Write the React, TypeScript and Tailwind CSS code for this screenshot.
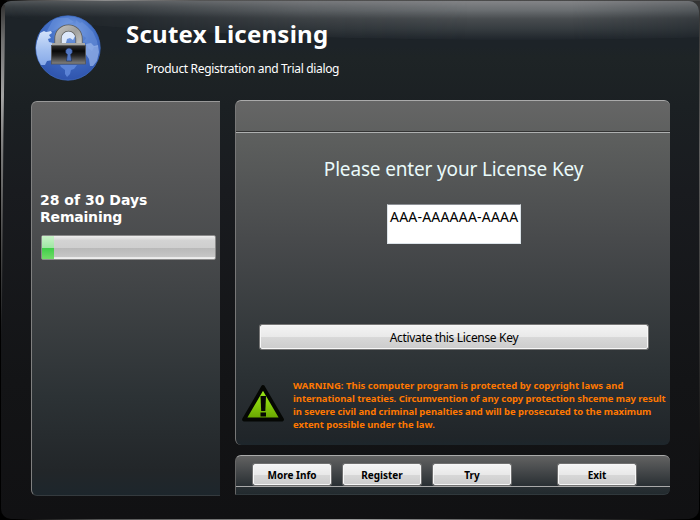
import React from "react";

function Globe() {
  return (
    <svg className="block h-[66px] w-[66px]" viewBox="0 0 66 66">
      <defs>
        <radialGradient id="sea" cx="0.55" cy="0.25" r="0.75">
          <stop offset="0" stopColor="#7fa5e6" />
          <stop offset="0.4" stopColor="#4673c9" />
          <stop offset="1" stopColor="#2f54ad" />
        </radialGradient>
        <linearGradient id="land" x1="0" y1="0" x2="0" y2="1">
          <stop offset="0" stopColor="#d3e2fa" />
          <stop offset="0.55" stopColor="#a3c0f0" />
          <stop offset="1" stopColor="#86a9e8" />
        </linearGradient>
        <linearGradient id="steel" x1="0" y1="0" x2="1" y2="1">
          <stop offset="0" stopColor="#bdbdbb" />
          <stop offset="0.5" stopColor="#a0a09d" />
          <stop offset="1" stopColor="#c4c4c0" />
        </linearGradient>
        <linearGradient id="body" x1="0" y1="0" x2="0" y2="1">
          <stop offset="0" stopColor="#303030" />
          <stop offset="0.3" stopColor="#080808" />
          <stop offset="0.55" stopColor="#252525" />
          <stop offset="1" stopColor="#858585" />
        </linearGradient>
        <clipPath id="disc"><circle cx="33" cy="33" r="32" /></clipPath>
      </defs>
      <circle cx="33" cy="33" r="32.2" fill="url(#sea)" stroke="#3f6cc4" strokeWidth="0.8" />
      <g clipPath="url(#disc)">
        <path d="M5 18l4-2 2 1 5-1 1 2-3 2 2 3-3 1 1 3 4 1v17l-6 1-2 4-5 0-4-7-1-9 2-8z" fill="url(#land)" />
        <path d="M26 20l4-5 6-1 4 3 0 4-2 4-3-2-3 1-1 4-6 0z" fill="#dce8fb" />
        <path d="M41 5l4 3 2-1 5 4 6 6 4 9 1 6-4 0-2 4-4-3-2-5-3-1 3-4-4-3-3-6-4-2z" fill="#7198de" opacity="0.5" />
        <path d="M51 29l5-1 3 3 4-1 1 7-2 9-4 5-3 0-1-7-4-6z" fill="#9bb8ec" opacity="0.7" />
        <path d="M25 50l17 0-3 4-3 1-1 4-3 3-2-3 0-4-4-3z" fill="#6189da" opacity="0.85" />
        <path d="M19 3h14l6 4-11 3-9 6-7 0z" fill="#7ca2e7" opacity="0.4" />
      </g>
      <path d="M23 31V23.500a10.500 10.500 0 0 1 21 0V31" fill="none" stroke="#5e5e5b" strokeWidth="7.200" />
      <path d="M23 31V23.500a10.500 10.500 0 0 1 21 0V31" fill="none" stroke="url(#steel)" strokeWidth="5.600" />
      <rect x="17" y="28" width="33" height="3" fill="#a7a7a4" />
      <rect x="16.500" y="30.500" width="34" height="18.500" fill="url(#body)" stroke="#555" strokeWidth="0.8" />
      <path d="M34 33a3.400 3.400 0 0 1 1.600 6.400l1 6.600h-5.200l1-6.600A3.400 3.400 0 0 1 34 33z" fill="#5278c4" stroke="#1c2d58" strokeWidth="0.6" />
    </svg>
  );
}

function Warning() {
  return (
    <svg className="block h-[40px] w-[44px] shrink-0" viewBox="0 0 44 40">
      <defs>
        <linearGradient id="lime" x1="0" y1="0" x2="0" y2="1">
          <stop offset="0" stopColor="#9bea1c" />
          <stop offset="0.5" stopColor="#88d00c" />
          <stop offset="1" stopColor="#66a200" />
        </linearGradient>
      </defs>
      <path d="M22 3L41 35.500H3z" fill="url(#lime)" stroke="#050704" strokeWidth="3.800" strokeLinejoin="round" />
      <path d="M19.500 12h5.500l-0.700 15h-4.100z" fill="#050704" />
      <rect x="19.500" y="28.500" width="5.500" height="4" fill="#050704" />
    </svg>
  );
}

const face =
  "flex items-center justify-center border border-[#f7f7f7] bg-[linear-gradient(#f3f3f3_0%,#e9e9e9_50%,#d8d8d8_51%,#cdcdcd_100%)] text-black";

function SmallButton({ label, gap }: { label: string; gap: string }) {
  return (
    <button className={`${gap} ${face} h-[21px] w-[78px] rounded-[2px] pt-px text-[10px] font-bold leading-none shadow-[0_0_0_1px_#707070]`}>
      {label}
    </button>
  );
}

export default function App() {
  return (
    <div className="flex h-[520px] w-[700px] flex-col overflow-hidden bg-black font-['Noto_Sans','Open_Sans',sans-serif]">
      <div className="h-px shrink-0 bg-[linear-gradient(90deg,#000_4px,#444_30px,#8c8c8c_105px,#555_200px,#444_690px)]" />
      <div className="flex h-[518px] shrink-0 bg-[linear-gradient(90deg,#000_50%,transparent_50%),linear-gradient(#333,#606060_150px,#333_330px,#000_500px)] pl-px pr-px">
        <div className="relative h-[518px] w-[698px] overflow-hidden rounded-[10px] bg-[linear-gradient(#1d2328_0px,#1d2328_45px,#1e2426_56px,#1b2023_105px,#191b1f_190px,#131416_380px,#111113_517px)]">
          <div className="absolute left-0 top-0 h-[16px] w-full bg-[linear-gradient(#505457,#363c40_6px,#262c31_13px,transparent)]" />
          <div className="absolute -left-[130px] -top-[80px] h-[119px] w-[1290px] rounded-[50%] bg-[linear-gradient(#838487_80px,#6b6f72_89px,#484c4f_98px,#363c40_108px,#1f252b_119px)] [mask-image:linear-gradient(90deg,transparent_130px,#0003_260px,#000b_430px,#000_600px,#000_700px,#0009_828px)]" />
          <div className="absolute left-0 top-[4px] h-[340px] w-[4px] bg-[linear-gradient(#333,#707070_35px,#a4a4a4_92px,#777_150px,#444_250px,transparent)] [clip-path:polygon(0_0,100%_0,100%_20px,60%_130px,25%_300px,0_340px)]" />
          <div className="relative flex h-full flex-col">
            <header className="flex h-[99px] pl-[34px] pt-[14px]">
              <Globe />
              <div className="pl-[25px] text-white">
                <h1 className="mt-[2px] h-[34px] whitespace-nowrap text-[24px] font-bold leading-[34px] tracking-[0.24px]">Scutex Licensing</h1>
                <p className="ml-[20px] mt-[10px] whitespace-nowrap text-[12px] leading-[16px] tracking-[-0.33px]">Product Registration and Trial dialog</p>
              </div>
            </header>
            <div className="flex gap-[15px] pl-[30px]">
              <aside className="mt-px h-[395px] w-[189px] rounded-l-[6px] border-b border-l border-t border-b-[#343a3e] border-l-[#808080] border-t-[#999] bg-[linear-gradient(#626262,#484a4c_38%,#2c3235_75%,#222629_94%,#1d262c)] pl-[8px] pt-[90px]">
                <p className="font-['DejaVu_Sans',sans-serif] text-[14px] font-bold leading-[17px] text-white">28 of 30 Days<br /><span className="tracking-[-0.2px]">Remaining</span></p>
                <div className="ml-px mt-[9px] flex h-[25px] w-[175px] rounded-[2px] border border-[#8b8b8b] bg-[linear-gradient(#eee_0%,#d3d3d3_20%,#cfcfcf_50%,#b9b9b9_52%,#c6c6c6_90%,#eee_94%)]">
                  <div className="h-full w-[12px] bg-[linear-gradient(#c8f2c8,#a0e7a4_50%,#3ece48_52%,#72db69)]" />
                </div>
              </aside>
              <div className="w-[435px]">
                <main className="flex h-[345px] flex-col rounded-[6px] border-l border-t border-l-[#777] border-t-[#aaa] bg-[linear-gradient(#666_0%,#5c5e5d_12%,#484a4c_40%,#2c3235_78%,#202529_98%,#1d262c)]">
                  <div className="h-[32px] shrink-0 border-b border-[#aeb0b0] shadow-[inset_0_-1px_#333]" />
                  <h2 className="ml-px mt-[22px] whitespace-nowrap text-center text-[19px] leading-[28px] tracking-[-0.16px] text-[#eafafa]">Please enter your License Key</h2>
                  <div className="ml-[151px] mt-[21px] h-[40px] w-[134px] shrink-0 whitespace-nowrap border border-[#dce3e8] border-t-[#8d9095] bg-white pl-[2px] pt-[2px] text-[14px] leading-[20px] tracking-[0.2px] text-black">AAA-AAAAAA-AAAA</div>
                  <button className={`${face} ml-[24px] mt-[81px] h-[24px] w-[388px] shrink-0 rounded-[2px] pt-[2px] text-[12px] tracking-[-0.33px] shadow-[0_0_0_1px_#777]`}>Activate this License Key</button>
                  <div className="mt-[30px] flex pl-[5px]">
                    <div className="pt-[5px]"><Warning /></div>
                    <p className="ml-[8px] whitespace-nowrap text-[9.5px] font-bold leading-[13px] text-[#ff7800]">
                      <span className="tracking-[0.02px]">WARNING: This computer program is protected by copyright laws and</span><br />
                      <span className="tracking-[-0.06px]">international treaties. Circumvention of any copy protection shceme may result</span><br />
                      <span className="tracking-[-0.055px]">in severe civil and criminal penalties and will be prosecuted to the maximum</span><br />
                      <span className="tracking-[-0.04px]">extent possible under the law.</span>
                    </p>
                  </div>
                </main>
                <footer className="mt-[10px] h-[40px] rounded-[6px] rounded-bl-none border-b border-l border-t border-b-[#30383c] border-l-[#666] border-t-[#aaa] bg-[linear-gradient(#626262,#45484a_40%,#2b3135_76%,#222a2e)]">
                  <div className="flex h-[31px] border-b border-[#aaa] pt-[8px]">
                    <SmallButton label="More Info" gap="ml-[17px]" />
                    <SmallButton label="Register" gap="ml-[12px]" />
                    <SmallButton label="Try" gap="ml-[12px]" />
                    <SmallButton label="Exit" gap="ml-[47px]" />
                  </div>
                </footer>
              </div>
            </div>
          </div>
        </div>
      </div>
      <div className="h-px shrink-0 bg-[linear-gradient(90deg,#000_15px,#555_100px,#999_350px,#555_500px,#000_690px)]" />
    </div>
  );
}
